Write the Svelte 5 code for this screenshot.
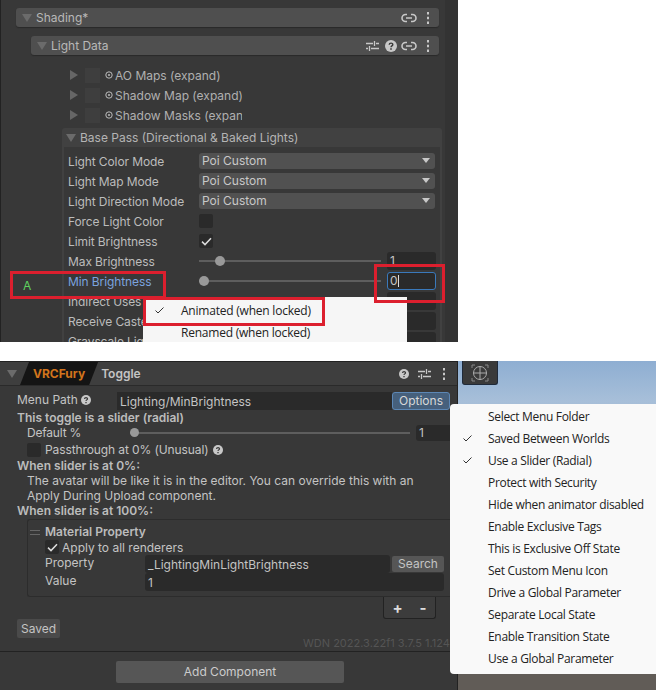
<script>
  const expands = ["AO Maps (expand)", "Shadow Map (expand)", "Shadow Masks (expan"];
  const selects = [
    ["Light Color Mode", "Poi Custom"],
    ["Light Map Mode", "Poi Custom"],
    ["Light Direction Mode", "Poi Custom"]
  ];
  const menuItems = [
    ["Select Menu Folder", false],
    ["Saved Between Worlds", true],
    ["Use a Slider (Radial)", true],
    ["Protect with Security", false],
    ["Hide when animator disabled", false],
    ["Enable Exclusive Tags", false],
    ["This is Exclusive Off State", false],
    ["Set Custom Menu Icon", false],
    ["Drive a Global Parameter", false],
    ["Separate Local State", false],
    ["Enable Transition State", false],
    ["Use a Global Parameter", false]
  ];
</script>

{#snippet tri()}
  <svg class="tri" width="10" height="10" viewBox="0 0 10 10"><path d="M0 1h10L5 9z" /></svg>
{/snippet}
{#snippet link()}
  <svg class="ico" width="16" height="12" viewBox="0 0 16 12"><path d="M6 2.5H4.5a3.3 3.3 0 0 0 0 7H6M10 2.5h1.5a3.3 3.3 0 0 1 0 7H10M5 6h6" fill="none" stroke="#c8c8c8" stroke-width="1.6" /></svg>
{/snippet}
{#snippet kebab()}
  <svg class="ico" width="4" height="12" viewBox="0 0 4 12"><path d="M1 0h2v2.4H1zM1 4.8h2v2.4H1zM1 9.6h2V12H1z" fill="#c8c8c8" /></svg>
{/snippet}
{#snippet sliders()}
  <svg class="ico" width="13" height="12" viewBox="0 0 13 12"><path d="M0 3.5h7M10 3.5h3M0 8.5h2M5 8.5h8M8.5 1v5M3.5 6v5" fill="none" stroke="#c8c8c8" stroke-width="1.3" /></svg>
{/snippet}
{#snippet help(size)}
  <svg class="ico" width={size} height={size} viewBox="0 0 12 12"><circle cx="6" cy="6" r="6" fill="#c8c8c8" /><path d="M4.2 4.7C4.3 2.6 7.9 2.7 7.8 4.6 7.7 5.9 6 5.8 6 7.2" fill="none" stroke="#383838" stroke-width="1.4" /><path d="M5.2 8.3h1.6v1.5H5.2z" fill="#383838" /></svg>
{/snippet}
{#snippet tick()}
  <svg width="11" height="9" viewBox="0 0 11 9"><path d="M1 4.6 4 7.6 10 1.2" fill="none" stroke="#dcdcdc" stroke-width="1.5" /></svg>
{/snippet}
{#snippet menuTick()}
  <svg width="9" height="7" viewBox="0 0 9 7"><path d="M.5 3.5 3 6 8.5.5" fill="none" stroke="#333" stroke-width="1" /></svg>
{/snippet}

<div class="page">
  <section class="top">
    <div class="top-inspector">
      <div class="foldout shading">
        {@render tri()}
        <span class="grow">Shading*</span>
        <span class="fold-link">{@render link()}</span>
        <span class="fold-kebab">{@render kebab()}</span>
      </div>
      <div class="foldout lightdata">
        {@render tri()}
        <span class="grow">Light Data</span>
        {@render sliders()}
        {@render help(12)}
        <span class="fold-link">{@render link()}</span>
        <span class="fold-kebab">{@render kebab()}</span>
      </div>

      <div class="expands">
        {#each expands as label}
          <div class="expand-row">
            <svg width="8" height="10" viewBox="0 0 8 10"><path d="M0 0l8 5-8 5z" fill="#666" /></svg>
            <span class="swatch"></span>
            <svg class="target" width="8" height="8" viewBox="0 0 8 8"><circle cx="4" cy="4" r="3.2" fill="none" stroke="#bbb" /><circle cx="4" cy="4" r="1" fill="#bbb" /></svg>
            <span class="expand-label">{label}</span>
          </div>
        {/each}
      </div>

      <div class="basepass">
        <div class="basepass-head">
          {@render tri()}
          <span>Base Pass (Directional &amp; Baked Lights)</span>
        </div>
        <div class="props">
          {#each selects as [label, value]}
            <div class="prop">
              <span class="prop-label">{label}</span>
              <div class="select"><span class="grow">{value}</span><svg width="8" height="5" viewBox="0 0 8 5"><path d="M0 0h8L4 5z" fill="#c8c8c8" /></svg></div>
            </div>
          {/each}
          <div class="prop">
            <span class="prop-label">Force Light Color</span>
            <span class="check"></span>
          </div>
          <div class="prop">
            <span class="prop-label">Limit Brightness</span>
            <span class="check">{@render tick()}</span>
          </div>
          <div class="prop">
            <span class="prop-label">Max Brightness</span>
            <div class="track"><span class="knob max"></span></div>
            <span class="num">1</span>
          </div>
          <div class="prop">
            <span class="prop-label blue">Min Brightness</span>
            <div class="track"><span class="knob"></span></div>
            <span class="num focus">0<i class="caret"></i></span>
          </div>
          <div class="prop">
            <span class="prop-label">Indirect Uses Normals</span>
            <span class="spacer"></span>
            <span class="num"></span>
          </div>
          <div class="prop">
            <span class="prop-label">Receive Casted Shadows</span>
            <span class="spacer"></span>
            <span class="num"></span>
          </div>
          <div class="prop">
            <span class="prop-label">Grayscale Lightmaps</span>
            <span class="spacer"></span>
            <span class="num"></span>
          </div>
        </div>
      </div>
    </div>
    <div class="top-blank"></div>

    <span class="anim-a">A</span>
    <div class="popup">
      <div class="popup-item"><span class="popup-check">{@render menuTick()}</span>Animated (when locked)</div>
      <div class="popup-item"><span class="popup-check"></span>Renamed (when locked)</div>
    </div>
    <div class="red box-a"></div>
    <div class="red box-b"></div>
    <div class="red box-c"></div>
  </section>

  <section class="bottom">
    <div class="inspector">
      <header class="comp-head">
        {@render tri()}
        <span class="brand">VRCFury</span>
        <span class="comp-title grow">Toggle</span>
        {@render help(10)}
        {@render sliders()}
        <span class="head-kebab">{@render kebab()}</span>
      </header>

      <div class="body">
        <div class="path-row">
          <span class="path-label">Menu Path {@render help(10)}</span>
          <span class="path-field">Lighting/MinBrightness</span>
          <span class="options">Options</span>
        </div>
        <div class="bold">This toggle is a slider (radial)</div>
        <div class="indent default-row">
          <span class="default-label">Default %</span>
          <div class="track"><span class="knob small"></span></div>
          <span class="num wide">1</span>
        </div>
        <div class="indent pass-row">
          <span class="check">&nbsp;</span>
          <span>Passthrough at 0% (Unusual)</span>
          {@render help(10)}
        </div>
        <div class="bold">When slider is at 0%:</div>
        <div class="indent para">The avatar will be like it is in the editor. You can override this with an Apply During Upload component.</div>
        <div class="bold">When slider is at 100%:</div>

        <div class="action">
          <div class="bold mat"><span class="grip"></span>Material Property</div>
          <div class="apply"><span class="check">{@render tick()}</span>Apply to all renderers</div>
          <div class="field-row">
            <span class="field-label">Property</span>
            <span class="field">_LightingMinLightBrightness</span>
            <span class="search">Search</span>
          </div>
          <div class="field-row">
            <span class="field-label">Value</span>
            <span class="field full">1</span>
          </div>
        </div>
        <div class="plusminus-wrap">
          <div class="plusminus"><b>+</b><b>-</b></div>
        </div>
        <span class="saved">Saved</span>
        <div class="version">WDN 2022.3.22f1 3.7.5 1.1241.0</div>
      </div>

      <footer class="foot">
        <span class="add">Add Component</span>
      </footer>
    </div>

    <div class="scene">
      <div class="scene-tool">
        <svg width="22" height="20" viewBox="0 0 22 20"><circle cx="11" cy="10" r="6.5" fill="none" stroke="#aaa" /><path d="M11 3v14M4 10h14" stroke="#aaa" /><path d="M3 5V2h3M19 5V2h-3M3 15v3h3M19 15v3h-3" fill="none" stroke="#888" /></svg>
      </div>
    </div>

    <div class="menu">
      {#each menuItems as [label, checked]}
        <div class="menu-item">
          <span class="menu-check">{#if checked}{@render menuTick()}{/if}</span>{label}
        </div>
      {/each}
    </div>
  </section>
</div>

<style>
  :global(body) {
    margin: 0;
    background: #fff;
  }

  .page {
    width: 656px;
    height: 690px;
    overflow: hidden;
    font-family: Inter, "Liberation Sans", sans-serif;
    font-size: 12px;
    color: #c4c4c4;
    background: #fff;
  }

  .grow {
    flex: 1;
  }

  .ico {
    flex: none;
  }

  .tri {
    flex: none;
    fill: #6b6b6b;
  }

  /* top screenshot */
  .top {
    position: relative;
    height: 342px;
    overflow: hidden;
    display: flex;
  }

  .top-inspector {
    box-sizing: border-box;
    width: 458px;
    height: 342px;
    padding: 8px 0 0 16px;
    background: #383838;
    border-left: 1px solid #222;
    border-right: 13px solid #333;
  }

  .top-blank {
    flex: 1;
    background: #fff;
  }

  .foldout {
    display: flex;
    align-items: center;
    gap: 4px;
    height: 19px;
    padding: 0 9px 0 6px;
    background: #4f4f4f;
    border-radius: 3px;
    box-shadow: 0 1px 1px #2a2a2a;
    color: #b8b8b8;
  }

  .foldout > .ico {
    margin-left: 2px;
  }

  .fold-link {
    display: flex;
  }

  .fold-kebab {
    display: flex;
    margin-left: 5px;
  }

  .shading {
    width: 423px;
    margin-left: -1px;
    box-sizing: border-box;
  }

  .lightdata {
    width: 408px;
    box-sizing: border-box;
    margin: 9px 0 0 14px;
  }

  .expands {
    margin: 10px 0 0 53px;
  }

  .expand-row {
    display: flex;
    align-items: center;
    height: 20px;
    color: #b0b0b0;
  }

  .swatch {
    width: 15px;
    height: 15px;
    margin: 0 5px 0 7px;
    background: #3e3e3e;
    flex: none;
  }

  .target {
    flex: none;
    margin-right: 2px;
  }

  .expand-label {
    white-space: nowrap;
    width: 127px;
    overflow: hidden;
  }

  .basepass {
    width: 380px;
    box-sizing: border-box;
    margin: 3px 0 0 45px;
    padding: 0 2px;
    height: 300px;
    background: #414141;
    border-radius: 3px 3px 0 0;
  }

  .basepass-head {
    display: flex;
    align-items: center;
    gap: 4px;
    height: 19px;
    padding-left: 2px;
    color: #b4b4b4;
  }

  .props {
    background: #383838;
    padding: 4px 4px 0 4px;
    height: 280px;
  }

  .prop {
    display: flex;
    align-items: center;
    height: 20px;
    gap: 6px;
    white-space: nowrap;
  }

  .prop-label {
    flex: none;
    width: 125px;
    overflow: hidden;
    color: #bcbcbc;
    letter-spacing: -0.1px;
  }

  .prop-label.blue {
    color: #7ba3df;
  }

  .select {
    display: flex;
    align-items: center;
    box-sizing: border-box;
    width: 236px;
    height: 16px;
    padding: 0 5px 1px 3px;
    background: #515151;
    border-radius: 3px;
    color: #c8c8c8;
  }

  .check {
    display: flex;
    align-items: center;
    justify-content: center;
    box-sizing: border-box;
    flex: none;
    width: 14px;
    height: 14px;
    background: #2a2a2a;
    border-radius: 2px;
  }

  .track {
    position: relative;
    flex: 1;
    height: 2px;
    background: #5e5e5e;
  }

  .knob {
    position: absolute;
    left: 0;
    top: -4px;
    width: 10px;
    height: 10px;
    border-radius: 50%;
    background: #999;
  }

  .knob.max {
    left: 16px;
  }

  .spacer {
    flex: 1;
  }

  .num {
    box-sizing: border-box;
    flex: none;
    width: 49px;
    height: 18px;
    padding: 2px 3px;
    background: #2a2a2a;
    border-radius: 3px;
    line-height: 14px;
  }

  .num.focus {
    border: 1px solid #3a79bb;
    padding: 1px 2px;
  }

  .num.wide {
    width: 34px;
    border-radius: 3px 0 0 3px;
  }

  .caret {
    display: inline-block;
    width: 1px;
    height: 12px;
    vertical-align: -2px;
    background: #ddd;
  }

  .anim-a {
    position: absolute;
    left: 23px;
    top: 278px;
    color: #5fd35f;
  }

  .popup {
    position: absolute;
    left: 143px;
    top: 297px;
    width: 264px;
    height: 60px;
    background: #f6f6f6;
    font-family: "Open Sans", "Noto Sans", sans-serif;
    font-size: 12px;
    letter-spacing: -0.22px;
    color: #222;
    padding-top: 2px;
    box-sizing: border-box;
  }

  .popup-item {
    display: flex;
    align-items: center;
    height: 22px;
  }

  .popup-check {
    display: flex;
    justify-content: center;
    flex: none;
    width: 33px;
    margin-right: 5px;
  }

  .red {
    position: absolute;
    box-sizing: border-box;
    border: 3px solid #dc1f2e;
  }

  .box-a {
    left: 10px;
    top: 271px;
    width: 156px;
    height: 28px;
  }

  .box-b {
    left: 374px;
    top: 264px;
    width: 71px;
    height: 39px;
  }

  .box-c {
    left: 143px;
    top: 297px;
    width: 182px;
    height: 29px;
  }

  /* bottom screenshot */
  .bottom {
    position: relative;
    display: flex;
    height: 329px;
    margin-top: 19px;
  }

  .inspector {
    box-sizing: border-box;
    flex: none;
    width: 458px;
    height: 329px;
    display: flex;
    flex-direction: column;
    background: #383838;
    border-top: 1px solid #222;
    border-right: 1px solid #222;
  }

  .comp-head {
    display: flex;
    align-items: center;
    gap: 9px;
    height: 23px;
    padding: 0 11px 0 7px;
    background: #3e3e3e;
    border-bottom: 1px solid #2a2a2a;
    flex: none;
  }

  .head-kebab {
    display: flex;
    margin-left: 2px;
  }

  .brand {
    margin-left: -6px;
    padding: 0 13px;
    background: #141414;
    clip-path: polygon(9px 0, 100% 0, calc(100% - 9px) 100%, 0 100%);
    line-height: 23px;
    font-weight: 700;
    color: #d2741c;
  }

  .comp-title {
    margin-left: -6px;
    font-weight: 600;
    color: #c4c4c4;
  }

  .body {
    flex: 1;
    min-height: 0;
    padding: 6px 0 0 17px;
  }

  .path-row {
    display: flex;
    align-items: center;
    height: 18px;
  }

  .path-label {
    display: flex;
    align-items: center;
    gap: 3px;
    width: 100px;
    flex: none;
    margin-top: -3px;
  }

  .path-field {
    box-sizing: border-box;
    width: 275px;
    height: 18px;
    padding-left: 3px;
    line-height: 19px;
    background: #2a2a2a;
  }

  .options {
    box-sizing: border-box;
    width: 58px;
    height: 18px;
    line-height: 16px;
    text-align: center;
    background: #46607c;
    border: 1px solid #5c87b5;
    border-radius: 3px;
    color: #d8d8d8;
  }

  .bold {
    height: 15px;
    line-height: 15px;
    font-weight: 600;
    color: #bcbcbc;
  }

  .indent {
    margin-left: 10px;
  }

  .default-row {
    display: flex;
    align-items: center;
    height: 15px;
  }

  .default-label {
    flex: none;
    width: 103px;
    letter-spacing: -0.2px;
  }

  .default-row .track {
    flex: none;
    width: 280px;
  }

  .default-row .knob {
    width: 9px;
    height: 9px;
    top: -3.5px;
  }

  .default-row .num {
    margin-left: 6px;
    height: 16px;
    padding: 1px 3px;
  }

  .pass-row {
    display: flex;
    align-items: center;
    gap: 4px;
    height: 17px;
    margin-top: 1px;
    letter-spacing: -0.1px;
  }

  .para {
    width: 400px;
    line-height: 15px;
  }

  .action {
    box-sizing: border-box;
    width: 424px;
    height: 78px;
    margin: 1px 0 0 10px;
    padding: 5px 0 0 17px;
    border: 1px solid #2c2c2c;
    border-radius: 3px 0 0 3px;
    border-right: none;
  }

  .mat {
    position: relative;
    height: 14px;
    line-height: 14px;
  }

  .grip {
    position: absolute;
    left: -15px;
    top: 5px;
    width: 10px;
    height: 3px;
    border-top: 1px solid #666;
    border-bottom: 1px solid #666;
  }

  .apply {
    display: flex;
    align-items: center;
    gap: 3px;
    height: 16px;
  }

  .field-row {
    display: flex;
    align-items: center;
    height: 18px;
  }

  .field-label {
    flex: none;
    width: 100px;
    margin-top: -3px;
  }

  .field {
    flex: 1;
    box-sizing: border-box;
    height: 18px;
    line-height: 19px;
    padding-left: 3px;
    background: #2a2a2a;
    border-radius: 3px;
    margin-right: 5px;
  }

  .field.full {
    margin-right: 7px;
  }

  .search {
    box-sizing: border-box;
    flex: none;
    width: 52px;
    height: 16px;
    margin-left: -3px;
    margin-right: 7px;
    line-height: 16px;
    text-align: center;
    background: #565656;
    border-radius: 2px;
  }

  .plusminus-wrap {
    display: flex;
    justify-content: flex-end;
    width: 419px;
  }

  .plusminus {
    box-sizing: border-box;
    display: flex;
    justify-content: space-around;
    align-items: center;
    width: 53px;
    height: 22px;
    background: #3c3c3c;
    border: 1px solid #222;
    border-top: none;
    border-radius: 0 0 3px 3px;
    color: #ddd;
    font-size: 15px;
  }

  .saved {
    display: block;
    box-sizing: border-box;
    width: 43px;
    height: 19px;
    line-height: 19px;
    text-align: center;
    background: #4a4a4a;
    border-radius: 2px;
  }

  .version {
    margin: -2px 0 0 286px;
    line-height: 14px;
    white-space: nowrap;
    color: #555;
    font-size: 11px;
  }

  .foot {
    flex: none;
    display: flex;
    justify-content: center;
    align-items: flex-start;
    height: 39px;
    padding: 9px 0 0 3px;
    box-sizing: border-box;
    border-top: 1px solid #222;
  }

  .add {
    width: 228px;
    height: 22px;
    line-height: 22px;
    text-align: center;
    background: #565656;
    border-radius: 2px;
    color: #ccc;
  }

  .scene {
    flex: 1;
    background: linear-gradient(#8eaed2 0, #a7bfd9 40px, #615c57 310px);
  }

  .scene-tool {
    display: flex;
    align-items: center;
    justify-content: center;
    width: 36px;
    height: 24px;
    margin-left: 4px;
    background: #3a3a3a;
    border: 1px solid #1f2a3a;
    border-top: none;
    box-sizing: border-box;
    border-radius: 0 0 3px 3px;
  }

  .menu {
    position: absolute;
    left: 450px;
    top: 43px;
    width: 206px;
    height: 270px;
    box-sizing: border-box;
    padding-top: 1px;
    background: #f9f9f9;
    border-radius: 4px 0 0 4px;
    font-family: "Open Sans", "Noto Sans", sans-serif;
    font-size: 12px;
    letter-spacing: -0.32px;
    color: #222;
  }

  .menu-item {
    display: flex;
    align-items: center;
    height: 22px;
    white-space: nowrap;
  }

  .menu-check {
    display: flex;
    justify-content: center;
    flex: none;
    width: 34px;
    margin-right: 4px;
  }
</style>
